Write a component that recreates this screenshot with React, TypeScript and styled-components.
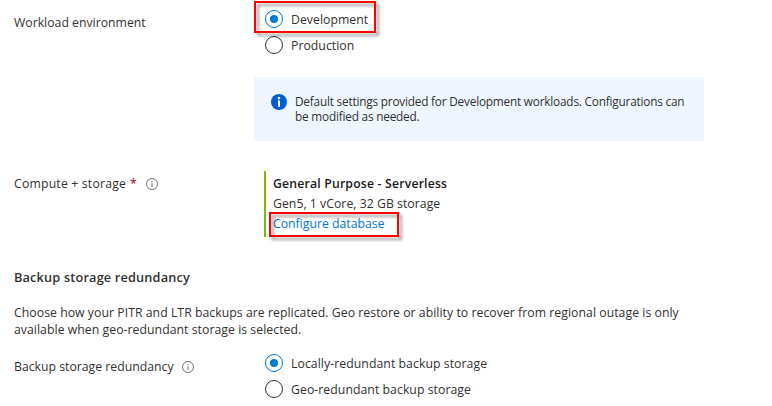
import React from "react";
import styled, { createGlobalStyle } from "styled-components";

const GlobalStyle = createGlobalStyle`
  * { box-sizing: border-box; }
  body {
    margin: 0;
    background: #fff;
    color: #323130;
    font-family: "Open Sans", "Noto Sans", sans-serif;
    font-size: 12.25px;
    line-height: 20px;
  }
`;

const Page = styled.main`
  display: flex;
  flex-direction: column;
  width: 772px;
  height: 406px;
  padding: 6px 0 0 14px;
  overflow: hidden;
`;

const FormRow = styled.div<{ $gap?: number }>`
  display: grid;
  grid-template-columns: 240px 450px;
  margin-top: ${({ $gap = 0 }) => $gap}px;
`;

const Label = styled.div<{ $offset: number }>`
  display: flex;
  align-items: center;
  height: 20px;
  margin-top: ${({ $offset }) => $offset}px;
  white-space: pre;
`;

const Tracked = styled.span<{ $spacing: number }>`
  letter-spacing: ${({ $spacing }) => $spacing}px;
`;

const Required = styled.span`
  margin-left: 4px;
  color: #a4262c;
  font-weight: 600;
`;

const HintIcon = styled.svg<{ $left: number }>`
  width: 12px;
  height: 12px;
  margin-left: ${({ $left }) => $left}px;
`;

const RadioGroup = styled.div`
  display: flex;
  flex-direction: column;
`;

const RadioOption = styled.label`
  position: relative;
  display: flex;
  align-items: center;
  gap: 8px;
  height: 26px;
  padding-left: 11px;
  white-space: nowrap;
`;

const RadioText = styled(Tracked)`
  padding-top: 2px;
`;

const RadioMark = styled.span<{ $checked?: boolean }>`
  display: flex;
  align-items: center;
  justify-content: center;
  width: 18px;
  height: 18px;
  border: 1px solid ${({ $checked }) => ($checked ? "#0078d4" : "#323130")};
  border-radius: 50%;

  &::after {
    content: "";
    width: 8px;
    height: 8px;
    border-radius: 50%;
    background: ${({ $checked }) => ($checked ? "#0078d4" : "transparent")};
  }
`;

const Highlight = styled.span<{ $top: number; $left: number; $width: number; $height: number }>`
  position: absolute;
  top: ${({ $top }) => $top}px;
  left: ${({ $left }) => $left}px;
  width: ${({ $width }) => $width}px;
  height: ${({ $height }) => $height}px;
  border: 2px solid #ff0000;
  filter: drop-shadow(3px 3px 1.5px rgba(0, 0, 0, 0.4));
  pointer-events: none;
`;

const Notice = styled.div`
  display: flex;
  gap: 8px;
  width: 450px;
  height: 64px;
  margin: 19px 0 0 240px;
  padding: 17px 0 0 17px;
  border-radius: 2px;
  background: #eff6ff;
`;

const NoticeIcon = styled.svg`
  flex: none;
  width: 16px;
  height: 16px;
`;

const NoticeText = styled.p`
  margin: 0;
  font-size: 11.8px;
  line-height: 15px;
  letter-spacing: -0.2px;
  white-space: nowrap;
`;

const Summary = styled.div`
  display: flex;
  flex-direction: column;
  height: 66px;
  margin-left: 10px;
  padding: 3px 0 0 7px;
  border-left: 2px solid #7fba00;
`;

const SummaryTitle = styled.strong`
  color: #1b1a19;
  font-weight: 600;
  letter-spacing: 0.18px;
`;

const LinkLine = styled.div`
  position: relative;
`;

const Link = styled.a`
  color: #0078d4;
  text-decoration: none;
`;

const Heading = styled.h2`
  margin: 30px 0 0;
  font-size: 12.75px;
  font-weight: 600;
  line-height: 20px;
  letter-spacing: 0.16px;
`;

const Description = styled.p`
  margin: 17px 0 0;
  line-height: 17px;
  letter-spacing: 0.04px;
  white-space: nowrap;
`;

function Hint({ left }: { left: number }) {
  return (
    <HintIcon $left={left} viewBox="0 0 12 12" fill="none" stroke="#605e5c">
      <circle cx="6" cy="6" r="5.5" strokeWidth="0.9" />
      <path d="M6 5.2V9M6 3.1V4.2" strokeWidth="0.9" />
    </HintIcon>
  );
}

export default function App() {
  return (
    <>
      <GlobalStyle />
      <Page>
        <FormRow>
          <Label $offset={7}>Workload environment</Label>
          <RadioGroup>
            <RadioOption>
              <RadioMark $checked />
              <RadioText $spacing={0.03}>Development</RadioText>
              <Highlight $top={-5} $left={0} $width={122} $height={32} />
            </RadioOption>
            <RadioOption>
              <RadioMark />
              <RadioText $spacing={0.03}>Production</RadioText>
            </RadioOption>
          </RadioGroup>
        </FormRow>

        <Notice>
          <NoticeIcon viewBox="0 0 16 16">
            <circle cx="8" cy="8" r="8" fill="#015cda" />
            <circle cx="8" cy="4.1" r="1.3" fill="#fff" />
            <path d="M7 6.4h2v6.4H7z" fill="#fff" />
          </NoticeIcon>
          <NoticeText>
            Default settings provided for Development workloads. Configurations can
            <br />
            be modified as needed.
          </NoticeText>
        </Notice>

        <FormRow $gap={30}>
          <Label $offset={3}>
            <Tracked $spacing={0.18}>Compute + storage</Tracked>
            <Required>*</Required>
            <Hint left={9} />
          </Label>
          <Summary>
            <SummaryTitle>General Purpose - Serverless</SummaryTitle>
            <Tracked $spacing={0.03}>Gen5, 1 vCore, 32 GB storage</Tracked>
            <LinkLine>
              <Link>Configure database</Link>
              <Highlight $top={-2} $left={-4} $width={130} $height={25} />
            </LinkLine>
          </Summary>
        </FormRow>

        <Heading>Backup storage redundancy</Heading>
        <Description>
          Choose how your PITR and LTR backups are replicated. Geo restore or ability to recover from regional outage is only
          <br />
          available when geo-redundant storage is selected.
        </Description>

        <FormRow $gap={12}>
          <Label $offset={7}>
            <span>Backup storage redundancy</span>
            <Hint left={8} />
          </Label>
          <RadioGroup>
            <RadioOption>
              <RadioMark $checked />
              <RadioText $spacing={0.06}>Locally-redundant backup storage</RadioText>
            </RadioOption>
            <RadioOption>
              <RadioMark />
              <RadioText $spacing={0.05}>Geo-redundant backup storage</RadioText>
            </RadioOption>
          </RadioGroup>
        </FormRow>
      </Page>
    </>
  );
}
